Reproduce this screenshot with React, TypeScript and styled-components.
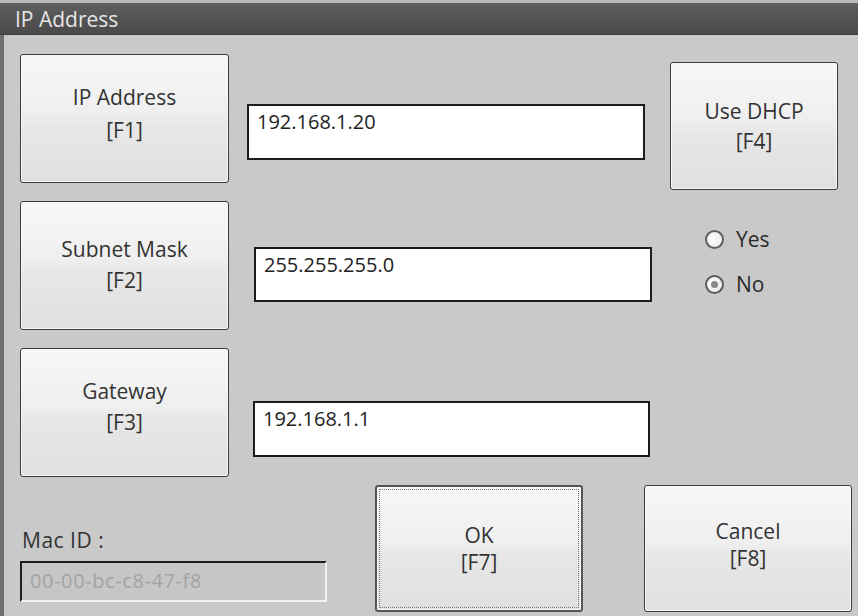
import React from "react"
import styled, { createGlobalStyle } from "styled-components"

const GlobalStyle = createGlobalStyle`
    html, body {
        margin: 0;
        padding: 0;
        width: 858px;
        height: 616px;
        overflow: hidden;
        background: #c9c9c9;
        font-family: "Open Sans", "Noto Sans", sans-serif;
    }
`

const Window = styled.div`
    width: 858px;
    height: 616px;
    display: flex;
    flex-direction: column;
    background: #c9c9c9;
`

const TitleBar = styled.div`
    height: 35px;
    box-sizing: border-box;
    display: flex;
    align-items: center;
    padding-left: 15px;
    border-top: 3px solid #b9b9b9;
    border-bottom: 1px solid #3c3c3c;
    background: linear-gradient(#5f5f5f, #535353 50%, #4b4b4b);
    color: #e6e6e6;
    font-size: 21px;
`

const Body = styled.div`
    flex: 1;
    display: flex;
    flex-direction: column;
    padding: 19px 0 0 16px;
    border-left: 4px solid #707070;
`

const Top = styled.div`
    display: flex;
`

const LeftArea = styled.div`
    width: 650px;
    display: flex;
    flex-direction: column;
    gap: 18px;
`

const Row = styled.div`
    display: flex;
    align-items: flex-start;
`

const KeyButton = styled.button<{ $w: number; $h: number; $lh: number; $shift?: number; $focused?: boolean }>`
    width: ${p => p.$w}px;
    height: ${p => p.$h}px;
    flex-shrink: 0;
    display: flex;
    flex-direction: column;
    align-items: center;
    justify-content: center;
    padding: 0 0 ${p => p.$shift || 0}px 0;
    border: 1px solid #3a3a3a;
    border-radius: 3px;
    background: linear-gradient(#f7f7f7, #efefef 45%, #e7e7e7 55%, #e0e0e0);
    box-shadow: inset 0 0 0 1px #fafafa;
    font-family: "Open Sans", "Noto Sans", sans-serif;
    font-size: 21px;
    line-height: ${p => p.$lh}px;
    color: #333;
    outline: ${p => (p.$focused ? "1px dotted #777" : "none")};
    outline-offset: -5px;
    ${p => (p.$focused ? "border: 2px solid #555;" : "")}
`

const TextBox = styled.div<{ $ml: number; $mt: number; $w: number; $h: number }>`
    margin-left: ${p => p.$ml}px;
    margin-top: ${p => p.$mt}px;
    width: ${p => p.$w}px;
    height: ${p => p.$h}px;
    box-sizing: border-box;
    border: 2px solid #1c1c1c;
    background: #fff;
    padding: 3px 0 0 8px;
    font-size: 20px;
    line-height: 26px;
    color: #222;
`

const RightColumn = styled.div`
    padding-top: 8px;
    display: flex;
    flex-direction: column;
`

const RadioGroup = styled.div`
    margin: 33px 0 0 35px;
    display: flex;
    flex-direction: column;
    gap: 13px;
`

const RadioRow = styled.label`
    display: flex;
    align-items: center;
    gap: 12px;
    font-size: 21px;
    line-height: 32px;
    color: #2a2a2a;
`

const RadioCircle = styled.span<{ $checked?: boolean }>`
    width: 19px;
    height: 19px;
    box-sizing: border-box;
    border-radius: 50%;
    border: 2px solid #5e5e5e;
    background: radial-gradient(circle at 40% 40%, #ffffff, #e4e4e4);
    display: flex;
    align-items: center;
    justify-content: center;

    &::after {
        content: "";
        display: ${p => (p.$checked ? "block" : "none")};
        width: 7px;
        height: 7px;
        border-radius: 50%;
        background: #8a8a8a;
    }
`

const Bottom = styled.div`
    margin-top: 8px;
    display: flex;
    align-items: flex-start;
`

const MacBlock = styled.div`
    width: 307px;
    height: 131px;
    display: flex;
    flex-direction: column;
    justify-content: flex-end;
    padding-bottom: 14px;
    box-sizing: border-box;
    margin-right: 48px;
`

const MacLabel = styled.div`
    font-size: 21px;
    color: #333;
    margin: 0 0 7px 2px;
    letter-spacing: 0.5px;
`

const MacBox = styled.div`
    height: 41px;
    box-sizing: border-box;
    border-top: 2px solid #1e1e1e;
    border-left: 2px solid #1e1e1e;
    border-right: 2px solid #f2f2f2;
    border-bottom: 2px solid #f2f2f2;
    background: #c6c6c6;
    padding: 5px 0 0 8px;
    font-size: 20px;
    line-height: 26px;
    letter-spacing: 0.6px;
    color: #a3a3a3;
`

const CancelWrap = styled.div`
    margin-left: 61px;
`

const App = () => {
    const rows = [
        { label: "IP Address", key: "F1", value: "192.168.1.20", lh: 33, shift: 10, ml: 18, mt: 50, w: 398, h: 56 },
        { label: "Subnet Mask", key: "F2", value: "255.255.255.0", lh: 31, shift: 2, ml: 25, mt: 46, w: 398, h: 55 },
        { label: "Gateway", key: "F3", value: "192.168.1.1", lh: 31, shift: 12, ml: 24, mt: 53, w: 397, h: 56 },
    ]

    return (
        <Window>
            <GlobalStyle />
            <TitleBar>IP Address</TitleBar>
            <Body>
                <Top>
                    <LeftArea>
                        {rows.map(r => (
                            <Row key={r.key}>
                                <KeyButton $w={209} $h={129} $lh={r.lh} $shift={r.shift}>
                                    <span>{r.label}</span>
                                    <span>[{r.key}]</span>
                                </KeyButton>
                                <TextBox $ml={r.ml} $mt={r.mt} $w={r.w} $h={r.h}>{r.value}</TextBox>
                            </Row>
                        ))}
                    </LeftArea>
                    <RightColumn>
                        <KeyButton $w={168} $h={128} $lh={30}>
                            <span>Use DHCP</span>
                            <span>[F4]</span>
                        </KeyButton>
                        <RadioGroup>
                            <RadioRow><RadioCircle />Yes</RadioRow>
                            <RadioRow><RadioCircle $checked />No</RadioRow>
                        </RadioGroup>
                    </RightColumn>
                </Top>
                <Bottom>
                    <MacBlock>
                        <MacLabel>Mac ID :</MacLabel>
                        <MacBox>00-00-bc-c8-47-f8</MacBox>
                    </MacBlock>
                    <KeyButton $w={208} $h={127} $lh={27} $focused>
                        <span>OK</span>
                        <span>[F7]</span>
                    </KeyButton>
                    <CancelWrap>
                        <KeyButton $w={208} $h={127} $lh={27} $shift={8}>
                            <span>Cancel</span>
                            <span>[F8]</span>
                        </KeyButton>
                    </CancelWrap>
                </Bottom>
            </Body>
        </Window>
    )
}

export default App
